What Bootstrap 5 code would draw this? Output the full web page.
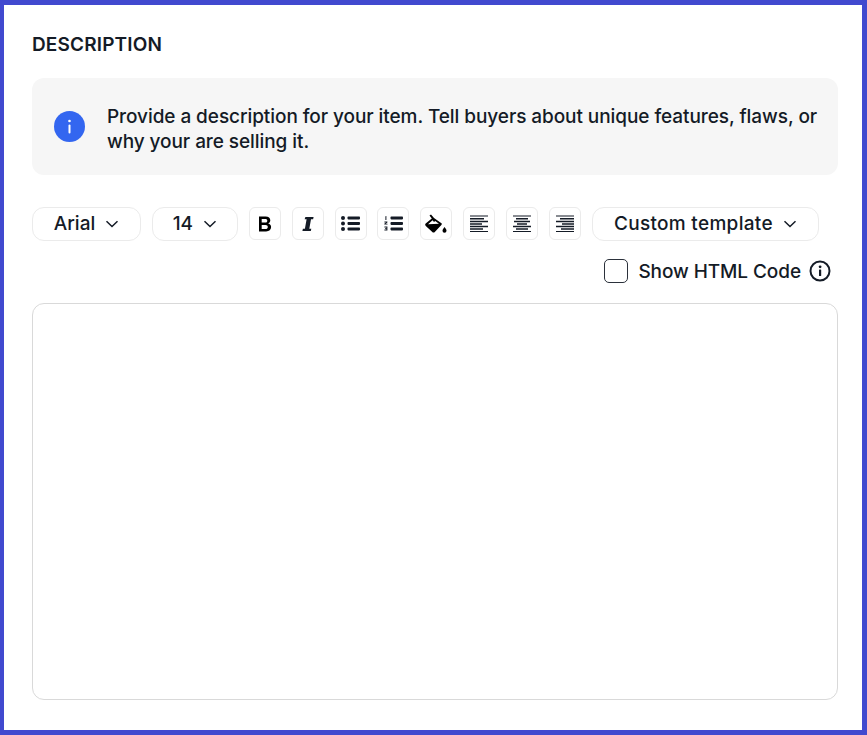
<!DOCTYPE html>
<html lang="en">
<head>
    <meta charset="UTF-8">
    <meta name="viewport" content="width=device-width, initial-scale=1.0">
    <title>Description</title>
    <link href="https://cdn.jsdelivr.net/npm/bootstrap@5.3.0/dist/css/bootstrap.min.css" rel="stylesheet">
    <style>
        html, body { height: 100%; }
        body {
            font-family: "Inter", "Liberation Sans", sans-serif;
            color: #141b26;
            background: #fff;
        }
        .frame {
            height: 735px;
            border: solid #4149cf;
            border-width: 5px 5px 5px 4px;
            padding: 26px 24px 29px 28px;
        }
        .desc-title { font-size: 19px; font-weight: 600; line-height: 26px; letter-spacing: 0.15px; margin: 1px 0 20px; }
        .info-box { height: 97px; background: #f6f6f6; border-radius: 12px; padding: 0 12px 0 22px; gap: 22px; margin-bottom: 32px; }
        .info-box p { font-size: 19px; font-weight: 500; line-height: 25px; margin: 5px 0 0; letter-spacing: -0.07px; }
        .tool-row { gap: 10.9px; height: 34px; margin-bottom: 13px; }
        .pill {
            height: 34px; background: #fff; border: 1px solid #ebebeb; border-radius: 12px;
            font-size: 19px; font-weight: 500; color: #141b26; gap: 10px; padding: 0;
        }
        .pill-font { width: 109px; }
        .pill-size { width: 86px; }
        .pill-tpl { width: 227px; letter-spacing: 0.3px; }
        .sq {
            width: 32px; height: 33px; background: #fff; border: 1px solid #ebebeb; border-radius: 6px; padding: 0;
        }
        .html-row { height: 34px; padding-right: 7px; margin-bottom: 15px; font-size: 19px; font-weight: 500; letter-spacing: -0.08px; }
        .html-label { padding-top: 2px; }
        .check-box { width: 24px; height: 24px; border: 1.5px solid #2b313b; border-radius: 5px; margin: -1px 10px 0 0; }
        .editor { display: block; width: 100%; height: 397px; border: 1px solid #d9d9d9; border-radius: 12px; resize: none; outline: none; }
    </style>
</head>
<body class="m-0">
<div class="frame">
    <h2 class="desc-title">DESCRIPTION</h2>

    <div class="info-box d-flex align-items-center">
        <svg class="flex-shrink-0" width="31" height="31" viewBox="0 0 31 31"><circle cx="15.5" cy="15.5" r="15.5" fill="#3366f0"/><rect x="14.5" y="13.5" width="2" height="9" rx="1" fill="#fff"/><circle cx="15.5" cy="10" r="1.3" fill="#fff"/></svg>
        <p>Provide a description for your item. Tell buyers about unique features, flaws, or why your are selling it.</p>
    </div>

    <div class="tool-row d-flex align-items-start">
        <button type="button" class="pill pill-font d-flex align-items-center justify-content-center">Arial
            <svg width="14" height="8" viewBox="0 0 14 8"><path d="M1.5 1.2 7 6.5l5.500-5.300" fill="none" stroke="#141b26" stroke-width="1.5"/></svg>
        </button>
        <button type="button" class="pill pill-size d-flex align-items-center justify-content-center">14
            <svg width="14" height="8" viewBox="0 0 14 8"><path d="M1.5 1.2 7 6.5l5.500-5.300" fill="none" stroke="#141b26" stroke-width="1.5"/></svg>
        </button>
        <button type="button" class="sq d-flex align-items-center justify-content-center">
            <svg width="14" height="16" viewBox="0 0 14 16"><path fill-rule="evenodd" d="M1 .5h6.600c3 0 4.700 1.400 4.700 3.800 0 1.500-.8 2.700-2.200 3.200 1.900.4 3 1.800 3 3.600 0 2.600-1.900 4.400-5 4.400H1zm2.700 2.400v3.700h3.500c1.300 0 2.100-.7 2.100-1.900s-.8-1.800-2.100-1.800zm0 6v4.200h3.800c1.500 0 2.300-.8 2.300-2.100s-.8-2.100-2.300-2.100z" fill="#000"/></svg>
        </button>
        <button type="button" class="sq d-flex align-items-center justify-content-center">
            <svg width="12" height="14" viewBox="0 0 12 14"><path d="M3.400 0h8.200l-.5 2.300H9L7.300 11.700h2l-.5 2.300H.4l.5-2.300h2l1.700-9.400h-2z" fill="#141b26"/></svg>
        </button>
        <button type="button" class="sq d-flex align-items-center justify-content-center">
            <svg width="19" height="15" viewBox="0 0 19 15"><circle cx="2" cy="2" r="2" fill="#141b26"/><circle cx="2" cy="7.5" r="2" fill="#141b26"/><circle cx="2" cy="13" r="2" fill="#141b26"/><rect x="6.500" y=".6" width="12.500" height="2.800" rx=".8" fill="#141b26"/><rect x="6.500" y="6.100" width="12.500" height="2.800" rx=".8" fill="#141b26"/><rect x="6.500" y="11.600" width="12.500" height="2.800" rx=".8" fill="#141b26"/></svg>
        </button>
        <button type="button" class="sq d-flex align-items-center justify-content-center">
            <svg width="19" height="15" viewBox="0 0 19 15"><path d="M1.200.6 2.400 0v4H1.400V1.200zM.4 5.600h3v.8L1.800 7.800h1.700v.8H.3v-.8L2 6.400H.4zM.4 10.600h3v3.800h-3v-.8h2v-.7H1v-.7h1.400v-.8h-2z" fill="#141b26"/><rect x="6.500" y=".6" width="12.500" height="2.800" rx=".8" fill="#141b26"/><rect x="6.500" y="6.100" width="12.500" height="2.800" rx=".8" fill="#141b26"/><rect x="6.500" y="11.600" width="12.500" height="2.800" rx=".8" fill="#141b26"/></svg>
        </button>
        <button type="button" class="sq d-flex align-items-center justify-content-center">
            <svg width="23" height="20" viewBox="0 0 23 20"><path d="M4.500 1.500 6 .4l3 3.600 7.800 5.500-.2 1.300L9.800 18c-.7.8-1.800.8-2.500.1L.8 12c-.8-.8-.8-1.700-.1-2.400L6.800 4.600z" fill="#000"/><path d="M3 10.300 7.600 6.200 9 8l1.200-1 3.800 2.800z" fill="#fff"/><path d="M19.500 13c1 1.400 2 2.500 2 3.700a2 2 0 0 1-4 0c0-1.200 1-2.300 2-3.700z" fill="#000"/></svg>
        </button>
        <button type="button" class="sq d-flex align-items-center justify-content-center">
            <svg width="20" height="18" viewBox="0 0 20 18"><path d="M1 1h18M1 16.500h18" stroke="#141b26" stroke-width="1.200"/><path d="M1 3.700h14M1 6.500h18M1 9h12M1 11.500h18M1 14h13" stroke="#141b26" stroke-width="1.600"/></svg>
        </button>
        <button type="button" class="sq d-flex align-items-center justify-content-center">
            <svg width="20" height="18" viewBox="0 0 20 18"><path d="M1 1h18M1 16.500h18" stroke="#141b26" stroke-width="1.200"/><path d="M4 3.700h12M2 6.500h16M5 9h10M1 11.500h18M4 14h12" stroke="#141b26" stroke-width="1.600"/></svg>
        </button>
        <button type="button" class="sq d-flex align-items-center justify-content-center">
            <svg width="20" height="18" viewBox="0 0 20 18"><path d="M1 1h18M1 16.500h18" stroke="#141b26" stroke-width="1.200"/><path d="M5 3.700h14M1 6.500h18M7 9h12M1 11.500h18M6 14h13" stroke="#141b26" stroke-width="1.600"/></svg>
        </button>
        <button type="button" class="pill pill-tpl d-flex align-items-center justify-content-center">Custom template
            <svg width="14" height="8" viewBox="0 0 14 8"><path d="M1.500 1.200 7 6.500l5.500-5.300" fill="none" stroke="#141b26" stroke-width="1.500"/></svg>
        </button>
    </div>

    <div class="html-row d-flex align-items-center justify-content-end">
        <span class="check-box"></span>
        <span class="html-label me-2">Show HTML Code</span>
        <svg width="22" height="22" viewBox="0 0 22 22"><circle cx="11" cy="11" r="9.500" fill="none" stroke="#141b26" stroke-width="2"/><rect x="10" y="9.500" width="2.200" height="6.500" rx=".5" fill="#141b26"/><circle cx="11.100" cy="6.800" r="1.400" fill="#141b26"/></svg>
    </div>

    <textarea class="editor"></textarea>
</div>
<script src="https://cdn.jsdelivr.net/npm/bootstrap@5.3.0/dist/js/bootstrap.bundle.min.js"></script>
</body>
</html>
